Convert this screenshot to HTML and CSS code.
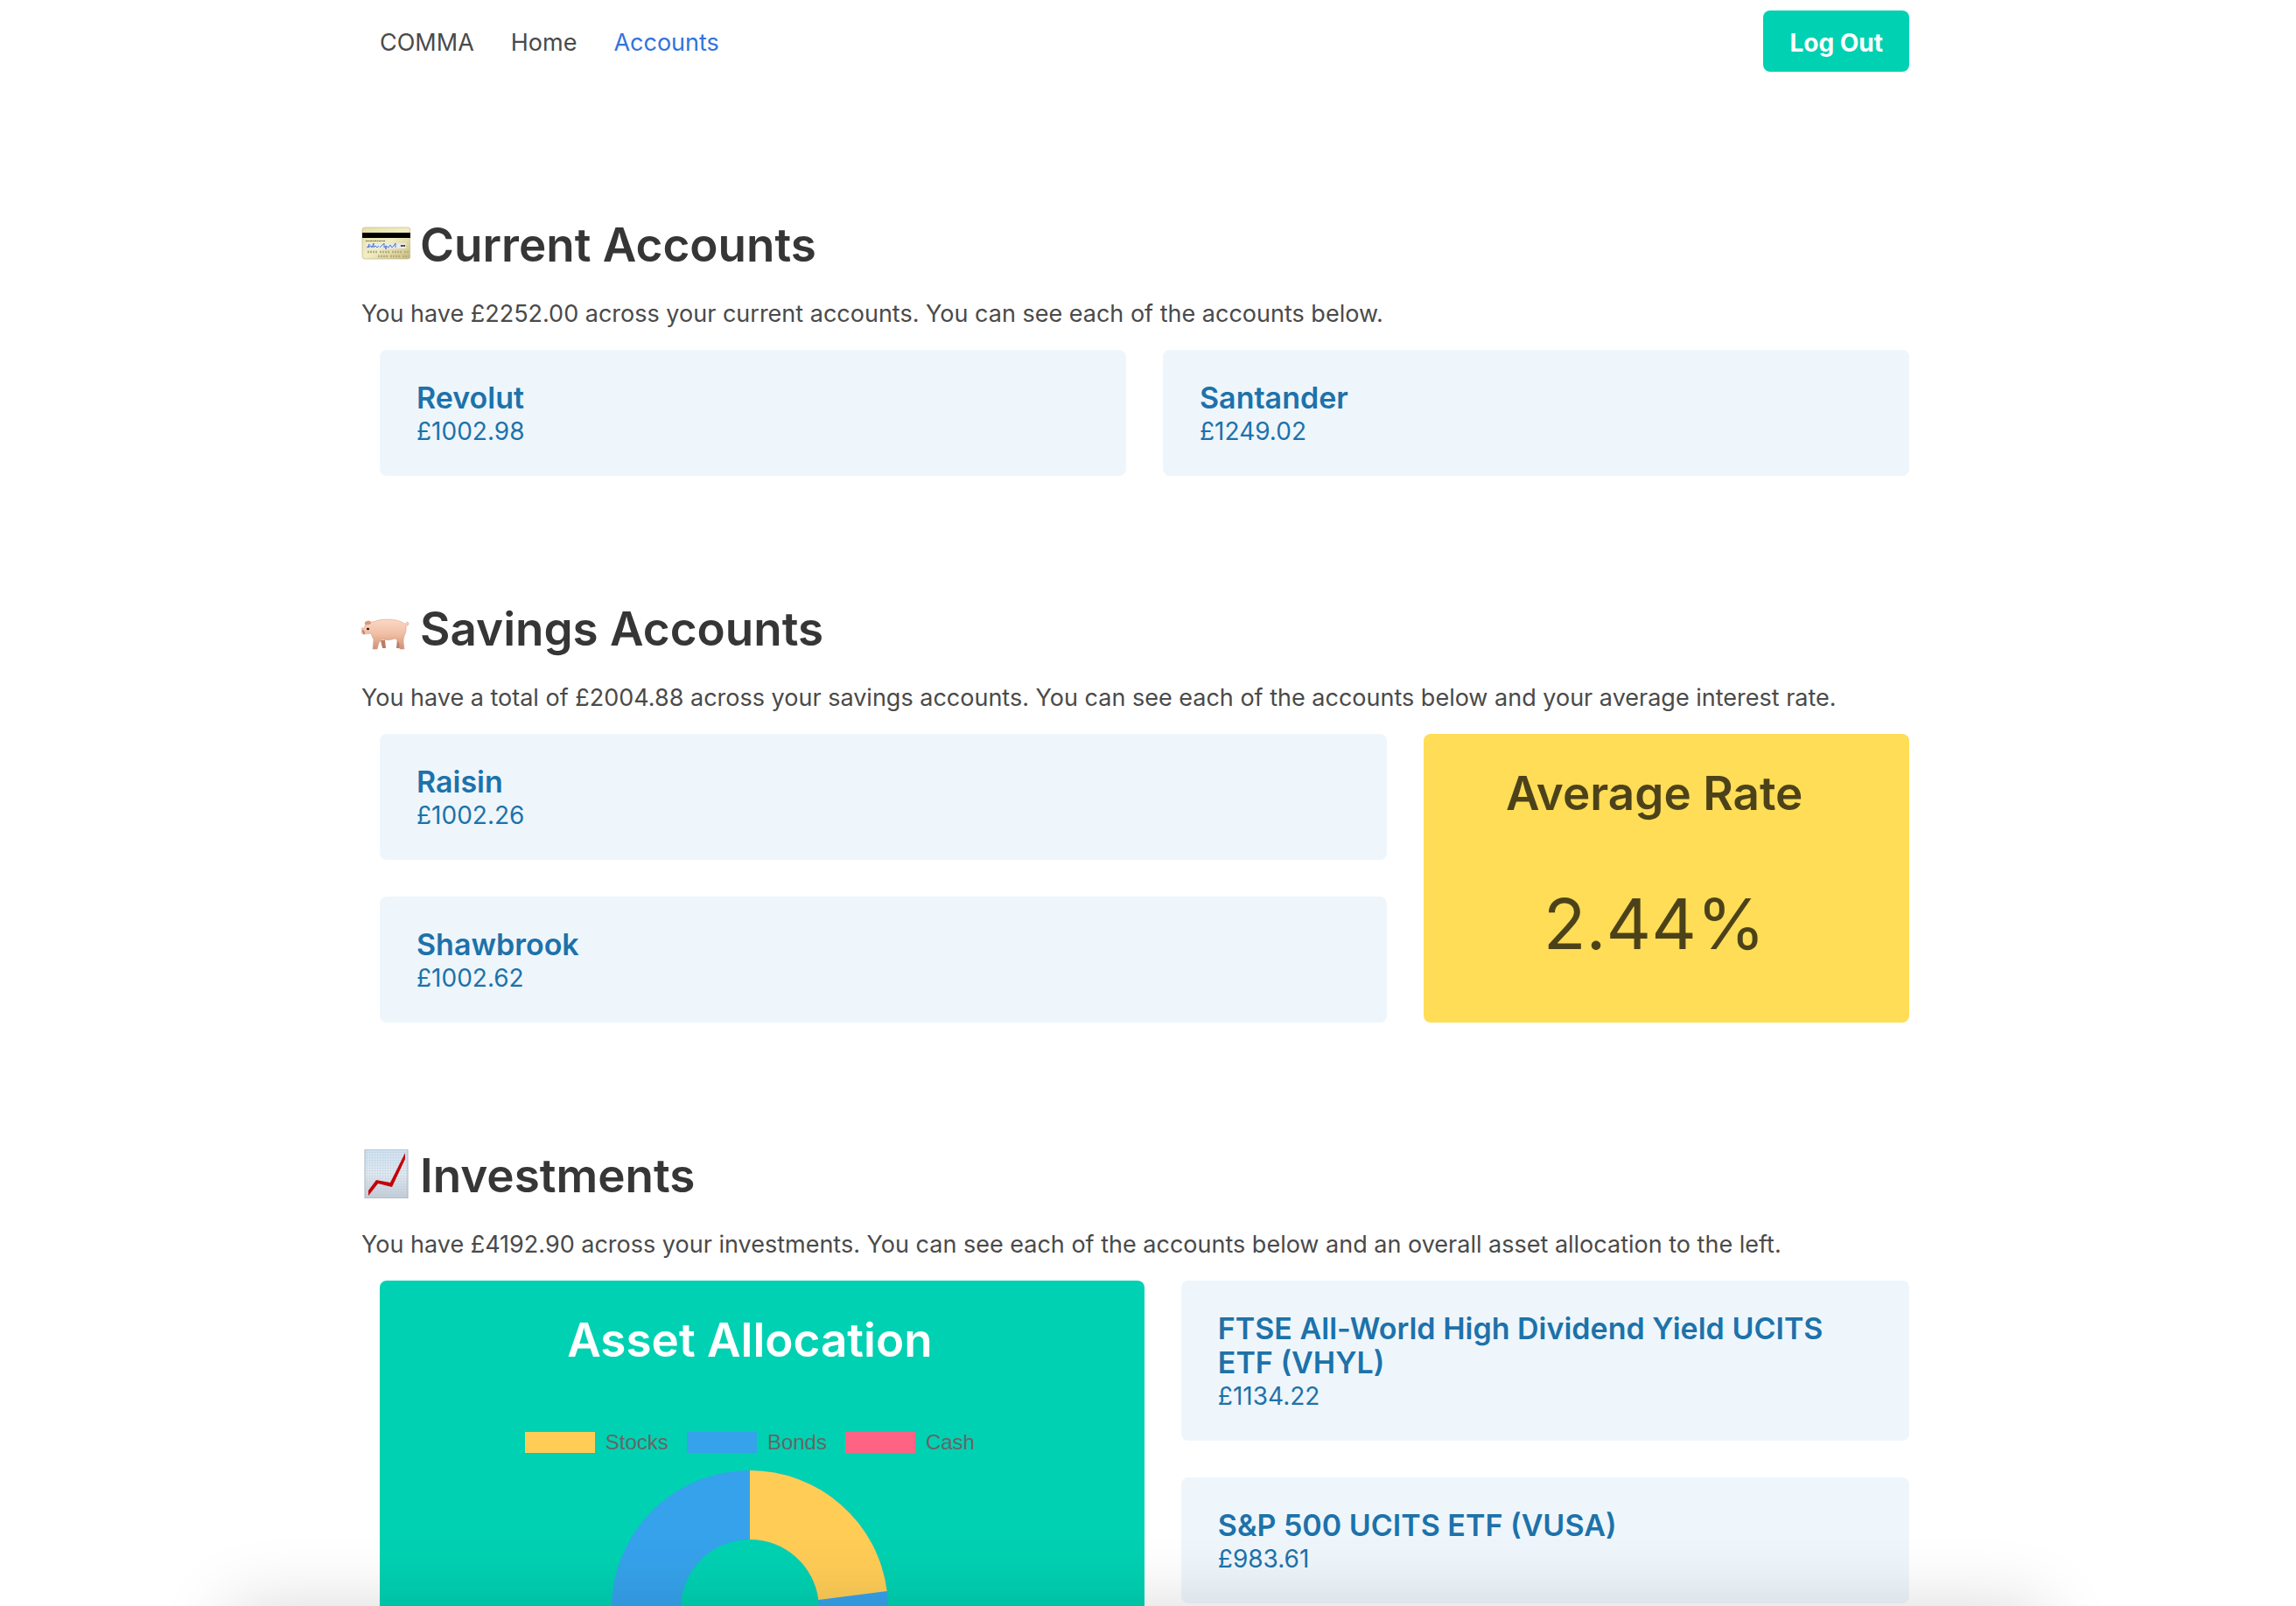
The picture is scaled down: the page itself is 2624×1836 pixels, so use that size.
FILE: index.html
```html
<!DOCTYPE html>
<html lang="en">
<head>
<meta charset="utf-8">
<title>COMMA – Accounts</title>
<link rel="stylesheet" href="styles.css">
</head>
<body>
<div class="container">
  <nav class="navbar" aria-label="Main">
    <a class="navbar-item" href="#">COMMA</a>
    <a class="navbar-item" href="#">Home</a>
    <a class="navbar-item is-active" href="#">Accounts</a>
    <button class="button" type="button">Log Out</button>
  </nav>

  <main>
    <section class="section">
      <h1 class="title">
        <svg class="emoji" viewBox="0 0 56 56" aria-hidden="true">
          <defs><linearGradient id="card" x1="0" y1="0" x2="1" y2="1"><stop offset="0" stop-color="#e6dfa6"/><stop offset=".5" stop-color="#f1edc4"/><stop offset="1" stop-color="#c9bc80"/></linearGradient></defs>
          <rect x="1" y="10" width="55" height="36" rx="3" fill="url(#card)" stroke="#b9b083" stroke-width=".6"/>
          <rect x="1" y="16" width="55" height="6" fill="#000"/>
          <path d="M5 25.500h22" stroke="#77704a" stroke-width="1" stroke-dasharray="2 .5"/>
          <rect x="5" y="28" width="46" height="6" fill="#e6e9ef"/>
          <path d="M6 33q4-1 3-4q-2 4-1 4l3-2l1 2l2-5v5l2-2l2 2l2-2M21 33l5-5v5l2-2v4v-4l3 2l2-3l2 3l2-2l2-3v5" fill="none" stroke="#4a7ad0" stroke-width="1"/>
          <path d="M45 31h5" stroke="#333" stroke-width="2" stroke-dasharray="1.400 .4"/>
          <path d="M7 38h47M19 43h35" stroke="#b7ad7c" stroke-width="2.400" stroke-dasharray="2 1 2 1 2 1 2 3"/>
        </svg>
        Current Accounts
      </h1>
      <p class="lead">You have £2252.00 across your current accounts. You can see each of the accounts below.</p>
      <div class="tiles tiles-half">
        <article class="notification"><h2 class="name">Revolut</h2><p class="amount">£1002.98</p></article>
        <article class="notification"><h2 class="name">Santander</h2><p class="amount">£1249.02</p></article>
      </div>
    </section>

    <section class="section">
      <h1 class="title">
        <svg class="emoji" viewBox="0 0 56 56" aria-hidden="true">
          <defs><linearGradient id="pig" x1="0" y1="0" x2="0" y2="1"><stop offset="0" stop-color="#fbd9c6"/><stop offset=".5" stop-color="#f0bea4"/><stop offset="1" stop-color="#cf9077"/></linearGradient></defs>
          <path d="M22 43l2 9h4l-1-9zM41 42l-1 10h4l3-8z" fill="#b97c65"/>
          <path d="M3 29q1-4 4-6q3-1 6-1q7-3 16-3q14 0 20 5q3 0 3-2l2 1q0 4-3 3q1 7-2 12q-1 3-1 7l1 8h-5l-1-7l-4-5q-8 3-15 1q-3 2-4 4l-2 7h-5l1-11q-2-3-3-7q-5 1-9 1l-2-2q-1-3 0-5z" fill="url(#pig)" stroke="#cf9a83" stroke-width=".5"/>
          <path d="M4 25q-1-3 2-4q5-2 5 3q-3 2-7 1z" fill="#d9987e"/>
          <ellipse cx="7.500" cy="30" rx="1.600" ry="1.300" fill="#221a18"/>
          <path d="M1 32q2 0 2 4" fill="none" stroke="#c4866e" stroke-width="2"/>
        </svg>
        Savings Accounts
      </h1>
      <p class="lead">You have a total of £2004.88 across your savings accounts. You can see each of the accounts below and your average interest rate.</p>
      <div class="tiles tiles-savings">
        <div class="stack">
          <article class="notification"><h2 class="name">Raisin</h2><p class="amount">£1002.26</p></article>
          <article class="notification"><h2 class="name">Shawbrook</h2><p class="amount">£1002.62</p></article>
        </div>
        <article class="notification is-warning">
          <h2 class="panel-title">Average Rate</h2>
          <p class="rate">2.44%</p>
        </article>
      </div>
    </section>

    <section class="section">
      <h1 class="title">
        <svg class="emoji" viewBox="0 0 56 56" aria-hidden="true">
          <defs>
            <linearGradient id="sheet" x1="0" y1="0" x2="0" y2="1"><stop offset="0" stop-color="#cfe2f2"/><stop offset=".5" stop-color="#e2ebf3"/><stop offset="1" stop-color="#c3ccd7"/></linearGradient>
            <pattern id="grid" width="3" height="3" patternUnits="userSpaceOnUse"><path d="M0 0h3M0 0v3" stroke="#b4c6d4" stroke-width=".6"/></pattern>
          </defs>
          <rect x="4" y="0" width="49" height="56" fill="url(#sheet)"/>
          <rect x="4" y="0" width="49" height="56" fill="url(#grid)" stroke="#aab4bf" stroke-width="1"/>
          <path d="M8 47L17 35l16 3L50 4v7L35 43l-16-4L8 53z" fill="#c40008"/>
        </svg>
        Investments
      </h1>
      <p class="lead">You have £4192.90 across your investments. You can see each of the accounts below and an overall asset allocation to the left.</p>
      <div class="tiles tiles-investments">
        <article class="notification is-primary">
          <h2 class="panel-title">Asset Allocation</h2>
          <ul class="legend">
            <li><span class="swatch stocks"></span>Stocks</li>
            <li><span class="swatch bonds"></span>Bonds</li>
            <li><span class="swatch cash"></span>Cash</li>
          </ul>
          <svg class="donut" viewBox="-158 -158 316 316" role="img" aria-label="Asset allocation chart">
            <circle r="118.500" fill="none" stroke="#36a2eb" stroke-width="79"/>
            <path d="M0-158A158 158 0 0 1 156.700-20.100L78.400-10A79 79 0 0 0 0-79z" fill="#ffcd56"/>
          </svg>
        </article>
        <div class="stack">
          <article class="notification"><h2 class="name">FTSE All-World High Dividend Yield UCITS ETF (VHYL)</h2><p class="amount">£1134.22</p></article>
          <article class="notification"><h2 class="name">S&amp;P 500 UCITS ETF (VUSA)</h2><p class="amount">£983.61</p></article>
        </div>
      </div>
    </section>
  </main>
</div>
<div class="edge-shadow"></div>
</body>
</html>
```
FILE: styles.css
```css
* { box-sizing: border-box; margin: 0; padding: 0; }

body {
  height: 100vh;
  overflow: hidden;
  padding-right: 8px;
  background: #fff;
  color: #4a4a4a;
  font: 400 27px/42px Inter, "Liberation Sans", sans-serif;
}

.container { max-width: 1790px; margin: 0 auto; }

.navbar {
  display: flex;
  align-items: center;
  gap: 42px;
  padding: 12px 21px;
}
.navbar-item { padding-top: 3px; color: #4a4a4a; text-decoration: none; }
.navbar-item.is-active { color: #3273dc; }
.button {
  height: 70px;
  margin-left: auto;
  padding: 3px 30px 0;
  border: 0;
  border-radius: 8px;
  background: #00d1b2;
  color: #fff;
  font: inherit;
  font-size: 28px;
  font-weight: 700;
}

.section { padding-top: 142px; }
.navbar + main { padding-top: 11px; }

.title {
  display: flex;
  gap: 11px;
  margin-bottom: 24px;
  color: #363636;
  font-size: 53px;
  font-weight: 600;
  line-height: 67px;
}
.emoji { width: 56px; height: 56px; flex: none; margin-top: 3px; }
.lead { margin-bottom: 20px; }

.tiles { display: grid; }
.tiles > * { margin: 0 21px; }
.tiles-half { grid-template-columns: 1fr 1fr; }
.tiles-savings { grid-template-columns: 2fr 1fr; }
.tiles-investments { grid-template-columns: 22fr 21fr; }
.stack { display: flex; flex-direction: column; gap: 42px; }

.notification {
  padding: 35px 70px 32px 42px;
  border-radius: 8px;
  background: #eef6fc;
  color: #1d72aa;
}
.name { font-size: 34px; font-weight: 600; line-height: 39px; }
.amount { font-size: 28px; line-height: 38px; }

.is-warning { background: #ffdd57; color: rgba(0, 0, 0, 0.7); text-align: center; }
.is-primary { background: #00d1b2; color: #fff; text-align: center; }
.panel-title { font-size: 53px; font-weight: 600; line-height: 67px; }
.rate { margin-top: 52px; font-size: 80px; line-height: 126px; }

.legend {
  display: flex;
  justify-content: center;
  gap: 21px;
  margin: 71px 0 20px;
  list-style: none;
  color: #666;
  font: 24px/24px "Liberation Sans", sans-serif;
}
.legend li { display: flex; gap: 12px; }
.swatch { width: 80px; height: 24px; }
.stocks { background: #ffcd56; }
.bonds { background: #36a2eb; }
.cash { background: #ff6384; }
.donut { display: block; width: 316px; margin: 0 auto; }

/* soft shade along the bottom of the window */
.edge-shadow {
  position: fixed;
  top: 100%;
  left: 10%;
  right: 11%;
  height: 400px;
  box-shadow: 0 0 76px rgba(0, 0, 0, 0.15);
}
```
